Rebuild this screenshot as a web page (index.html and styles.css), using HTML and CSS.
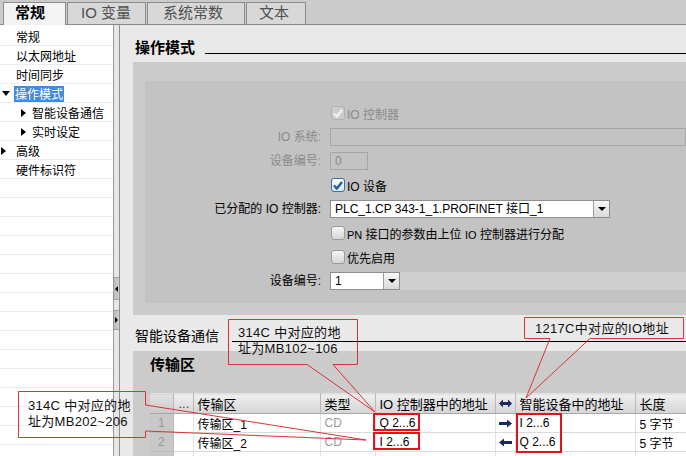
FILE: index.html
```html
<!DOCTYPE html>
<html lang="zh-CN">
<head>
<meta charset="utf-8">
<title>操作模式</title>
<link rel="stylesheet" href="styles.css">
</head>
<body>
<div class="app">
  <div class="tabs">
    <div class="tab active">常规</div>
    <div class="tab t-io">IO 变量</div>
    <div class="tab t-sys">系统常数</div>
    <div class="tab t-txt">文本</div>
  </div>
  <div class="content">
    <nav class="side">
      <div class="item">常规</div>
      <div class="item">以太网地址</div>
      <div class="item">时间同步</div>
      <div class="item open"><span class="tri-d"></span><span class="sel">操作模式</span></div>
      <div class="item sub"><span class="tri-r"></span>智能设备通信</div>
      <div class="item sub"><span class="tri-r"></span>实时设定</div>
      <div class="item top"><span class="tri-r"></span>高级</div>
      <div class="item">硬件标识符</div>
    </nav>
    <div class="splitter">
      <div class="sp-fill"></div>
      <div class="sp-btn b1"><span class="sp-l"></span></div>
      <div class="sp-gap"></div>
      <div class="sp-btn b2"><span class="sp-r"></span></div>
      <div class="sp-rest"></div>
    </div>
    <main class="main">
      <div class="sec-head h1">
        <span class="sec-title strong">操作模式</span>
        <span class="rule r1"></span>
      </div>
      <div class="panel">
        <div class="inner">
          <div class="form">
            <div class="lab"></div>
            <div class="ctl"><span class="cb dis"><svg width="10" height="9" viewBox="0 0 10 9"><path d="M1 4.5 L3.8 7.5 L9 1" fill="none" stroke="#f2f2f2" stroke-width="2.2"/></svg></span><span class="muted">IO 控制器</span></div>

            <div class="lab muted">IO 系统:</div>
            <div class="ctl"><span class="inp wide"></span></div>

            <div class="lab muted">设备编号:</div>
            <div class="ctl"><span class="inp small muted">0</span></div>

            <div class="lab"></div>
            <div class="ctl"><span class="cb on"><svg width="10" height="9" viewBox="0 0 10 9"><path d="M1 4.5 L3.8 7.5 L9 1" fill="none" stroke="#1d5ca6" stroke-width="2.4"/></svg></span><span>IO 设备</span></div>

            <div class="lab">已分配的 IO 控制器:</div>
            <div class="ctl"><div class="dd dd1"><span class="val">PLC_1.CP 343-1_1.PROFINET 接口_1</span><span class="btn"></span></div></div>

            <div class="lab"></div>
            <div class="ctl"><span class="cb"></span><span><span class="sm">PN</span> 接口的参数由上位 <span class="sm">IO</span> 控制器进行分配</span></div>

            <div class="lab"></div>
            <div class="ctl"><span class="cb"></span><span>优先启用</span></div>

            <div class="lab">设备编号:</div>
            <div class="ctl band"><div class="dd dd2"><span class="val">1</span><span class="btn"></span></div></div>
          </div>
        </div>
      </div>

      <div class="sec-head h2">
        <span class="sec-title">智能设备通信</span>
        <span class="rule r2"></span>
      </div>
      <div class="panel2">
        <div class="p2-title">传输区</div>
        <table class="grid">
          <colgroup>
            <col class="c0"><col class="c1"><col class="c2"><col class="c3"><col class="c4"><col class="c5"><col class="c6"><col class="c7">
          </colgroup>
          <thead>
            <tr>
              <th class="num"></th>
              <th class="dots">...</th>
              <th>传输区</th>
              <th>类型</th>
              <th>IO 控制器中的地址</th>
              <th class="arr"><svg width="13" height="9" viewBox="0 0 13 9"><path d="M0 4.5 L4 0.5 V3 H9 V0.5 L13 4.5 L9 8.5 V6 H4 V8.5 Z" fill="#1b2a5e"/></svg></th>
              <th>智能设备中的地址</th>
              <th>长度</th>
            </tr>
          </thead>
          <tbody>
            <tr>
              <td class="num">1</td>
              <td></td>
              <td>传输区_1</td>
              <td class="gray">CD</td>
              <td>Q 2...6</td>
              <td class="arr"><svg width="13" height="9" viewBox="0 0 13 9"><path d="M0 3 H8 V0.5 L13 4.5 L8 8.5 V6 H0 Z" fill="#1b2a5e"/></svg></td>
              <td>I 2...6</td>
              <td>5 字节</td>
            </tr>
            <tr>
              <td class="num">2</td>
              <td></td>
              <td>传输区_2</td>
              <td class="gray">CD</td>
              <td>I 2...6</td>
              <td class="arr"><svg width="13" height="9" viewBox="0 0 13 9"><path d="M13 3 H5 V0.5 L0 4.5 L5 8.5 V6 H13 Z" fill="#1b2a5e"/></svg></td>
              <td>Q 2...6</td>
              <td>5 字节</td>
            </tr>
            <tr class="empty">
              <td class="num"></td><td></td><td></td><td></td><td></td><td></td><td></td><td></td>
            </tr>
          </tbody>
        </table>
      </div>
    </main>
  </div>
</div>

<svg class="annot" width="686" height="456" viewBox="0 0 686 456">
  <g fill="none" stroke="#d9323a" stroke-width="1">
    <path d="M228.5 319.5 H357.5 V364.5 H333 L375 412 L307 364.5 H228.5 Z"/>
    <path d="M524.5 317.5 H683.5 V338.5 H590 L526 398 L550 338.5 H524.5 Z"/>
    <path d="M18.5 391.5 H145.5 V405 L366 440 L145.5 431 V437.5 H18.5 Z"/>
  </g>
  <g fill="none" stroke="#e3121b" stroke-width="2">
    <rect x="374" y="414" width="45" height="16"/>
    <rect x="374" y="433" width="45" height="16"/>
    <rect x="517" y="414" width="44" height="38"/>
  </g>
</svg>
<div class="note n1">314C 中对应的地<br>址为MB102~106</div>
<div class="note n2">1217C中对应的IO地址</div>
<div class="note n3">314C 中对应的地<br>址为MB202~206</div>
</body>
</html>
```

FILE: styles.css
```css
* { box-sizing: border-box; margin: 0; padding: 0; }
html, body { width: 686px; height: 456px; overflow: hidden; }
body {
  position: relative;
  font-family: "Liberation Sans", "Noto Sans CJK SC", sans-serif;
  font-size: 12px;
  color: #000;
  background: #e9e9e9;
}
.app { display: flex; flex-direction: column; height: 456px; }

/* tabs */
.tabs {
  flex: none;
  height: 25px;
  background: #cbcbcb;
  border-bottom: 1px solid #8a8a8a;
  display: flex;
  align-items: flex-end;
  padding-left: 3px;
}
.tab {
  height: 22px;
  border: 1px solid #8c8c8c;
  border-bottom: none;
  background: #d8d8d8;
  margin-right: 1px;
  padding-left: 13px;
  font-family: "Liberation Sans", "Noto Sans CJK SC", sans-serif;
  font-size: 15px;
  line-height: 20px;
  color: #505050;
  white-space: nowrap;
}
.tab.active {
  width: 63px;
  height: 23px;
  margin-bottom: -1px;
  background: #f3f3f3;
  color: #000;
  font-weight: bold;
  padding-left: 11px;
}
.t-io { width: 79px; }
.t-sys { width: 98px; padding-left: 15px; }
.t-txt { width: 60px; padding-left: 12px; }

.content { flex: 1; display: flex; min-height: 0; }

/* sidebar */
.side {
  width: 113px;
  flex: none;
  padding-top: 2px;
  background-color: #fff;
  background-image: repeating-linear-gradient(180deg, transparent 0, transparent 18px, #ececec 18px, #ececec 19px);
  background-position: 0 2px;
}
.item {
  height: 19px;
  display: flex;
  align-items: center;
  padding-left: 16px;
  font-family: "Noto Sans CJK SC", sans-serif;
  font-size: 12px;
  white-space: nowrap;
}
.item.open { padding-left: 2px; }
.item.sub { padding-left: 21px; }
.item.top { padding-left: 1px; }
.tri-d {
  width: 0; height: 0;
  border-left: 4px solid transparent;
  border-right: 4px solid transparent;
  border-top: 5px solid #000;
  margin-right: 4px;
}
.tri-r {
  width: 0; height: 0;
  border-top: 4px solid transparent;
  border-bottom: 4px solid transparent;
  border-left: 5px solid #000;
  margin-right: 6px;
}
.item.top .tri-r { margin-right: 10px; }
.sel {
  background: #3d8ce6;
  color: #fff;
  line-height: 16px;
  padding: 0 1px;
}

/* splitter */
.splitter {
  width: 7px;
  flex: none;
  display: flex;
  flex-direction: column;
  background: #e6e6e6;
  border-left: 1px solid #9a9a9a;
  border-right: 1px solid #8f8f8f;
}
.sp-fill { height: 252px; }
.sp-btn {
  background: linear-gradient(90deg, #b8b8b8, #d0d0d0);
  border-top: 1px solid #a0a0a0;
  border-bottom: 1px solid #a0a0a0;
  display: flex;
  align-items: center;
  justify-content: center;
}
.b1 { height: 23px; }
.b2 { height: 20px; }
.sp-gap { height: 10px; }
.sp-rest { flex: 1; }
.sp-l { width: 0; height: 0; border-top: 3px solid transparent; border-bottom: 3px solid transparent; border-right: 3px solid #000; }
.sp-r { width: 0; height: 0; border-top: 3px solid transparent; border-bottom: 3px solid transparent; border-left: 3px solid #000; }

/* main */
.main {
  flex: 1;
  min-width: 0;
  display: flex;
  flex-direction: column;
  background: #e9e9e9;
  overflow: hidden;
}
.sec-head {
  display: flex;
  align-items: flex-start;
  padding-left: 15px;
  flex: none;
}
.h1 { height: 37px; padding-top: 12px; }
.h2 { height: 36px; padding-top: 10px; }
.sec-title {
  font-family: "Noto Sans CJK SC", sans-serif;
  font-size: 14px;
  line-height: 20px;
  white-space: nowrap;
}
.sec-title.strong { font-size: 15px; font-weight: bold; }
.rule { flex: 1; border-bottom: 1px solid #000; }
.r1 { height: 17px; margin-left: 10px; }
.r2 { height: 17px; margin-left: 13px; }

.panel {
  flex: none;
  margin-left: 13px;
  background: #cbcbcb;
  padding: 19px 0 12px 12px;
}
.inner {
  background: #c3c3c3;
  padding: 23px 0 13px 0;
}
.form {
  display: grid;
  grid-template-columns: 176px 1fr;
  column-gap: 9px;
  row-gap: 6px;
  grid-auto-rows: 18px;
}
.lab {
  text-align: right;
  line-height: 18px;
  white-space: nowrap;
}
.ctl {
  display: flex;
  align-items: center;
  white-space: nowrap;
  min-width: 0;
}
.ctl.band { background: #cecece; }
.muted { color: #8a8a8a; }
.sm { font-size: 11px; }

.cb {
  flex: none;
  width: 14px;
  height: 14px;
  margin: 0 2px 0 1px;
  border: 1px solid #9b9b9b;
  border-radius: 3px;
  background: linear-gradient(#f6f6f6, #d6d6d6);
  display: inline-flex;
  align-items: center;
  justify-content: center;
}
.cb.dis { background: #cdcdcd; border-color: #b1b1b1; }
.cb.on { background: linear-gradient(#ffffff, #dde7f3); border-color: #3c6ea8; }

.inp {
  display: block;
  height: 18px;
  border: 1px solid #a6a6a6;
  line-height: 16px;
  padding-left: 4px;
}
.inp.wide { flex: 1; }
.inp.small { width: 38px; }

.dd {
  display: flex;
  height: 18px;
  border: 1px solid #8e8e8e;
  background: #fff;
}
.dd1 { width: 280px; }
.dd2 { width: 70px; }
.dd .val { flex: 1; padding-left: 4px; line-height: 16px; overflow: hidden; }
.dd .btn {
  width: 16px;
  border-left: 1px solid #9c9c9c;
  background: linear-gradient(#f7f7f7, #d9d9d9);
  display: flex;
  align-items: center;
  justify-content: center;
}
.dd .btn::after {
  content: "";
  border-top: 4px solid #000;
  border-left: 4px solid transparent;
  border-right: 4px solid transparent;
}

/* transfer area */
.panel2 {
  flex: 1;
  margin-left: 13px;
  background: #cbcbcb;
  padding: 4px 0 0 17px;
  overflow: hidden;
}
.p2-title {
  font-family: "Noto Sans CJK SC", sans-serif;
  font-size: 15px;
  font-weight: bold;
  line-height: 18px;
  margin-bottom: 20px;
}
.grid {
  border-collapse: collapse;
  table-layout: fixed;
  width: 545px;
}
.c0 { width: 23px; }
.c1 { width: 20px; }
.c2 { width: 127px; }
.c3 { width: 55px; }
.c4 { width: 120px; }
.c5 { width: 20px; }
.c6 { width: 120px; }
.c7 { width: 60px; }
.grid th, .grid td {
  height: 19px;
  padding: 0 0 0 4px;
  text-align: left;
  white-space: nowrap;
  overflow: hidden;
  vertical-align: middle;
}
.grid th {
  font-weight: normal;
  font-size: 13px;
  background: linear-gradient(#efefef, #d5d5d5);
  border-right: 1px solid #b9b9b9;
  border-bottom: 1px solid #a9a9a9;
  border-top: 1px solid #e2e2e2;
}
.grid td {
  background: #fff;
  font-size: 12px;
  border-right: 1px solid #e3e3e3;
  border-bottom: 1px solid #dadada;
}
.grid .num {
  text-align: center;
  padding: 0;
  color: #999;
}
.grid td.num { background: #c8c8c8; border-bottom-color: #bcbcbc; border-right-color: #bcbcbc; }
.grid th.num { background: linear-gradient(#e2e2e2, #c9c9c9); }
.grid .dots { color: #444; padding-left: 5px; }
.grid .arr { padding: 0; text-align: center; }
.grid .arr svg { display: block; margin: 0 auto; }
.grid .gray { color: #9a9a9a; }

/* annotations */
.annot {
  position: absolute;
  left: 0;
  top: 0;
  pointer-events: none;
}
.note {
  position: absolute;
  font-family: "Liberation Sans", "Noto Sans CJK SC", sans-serif;
  font-size: 13px;
  line-height: 16px;
  color: #111;
  white-space: nowrap;
  letter-spacing: 0.3px;
}
.n1 { left: 238px; top: 325px; }
.n2 { left: 535px; top: 321px; }
.n3 { left: 28px; top: 398px; }
```
